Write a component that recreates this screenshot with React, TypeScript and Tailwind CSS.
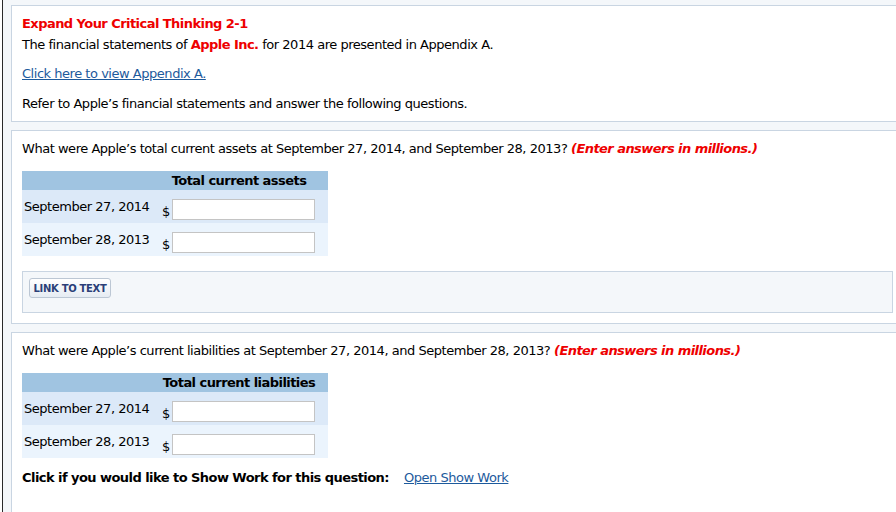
import React from "react";

const font = { fontFamily: '"DejaVu Sans", Verdana, sans-serif' };

function AnswerTable({ header }: { header: string }) {
  const rows = [
    { label: "September 27, 2014", bg: "bg-[#dce9f8]" },
    { label: "September 28, 2013", bg: "bg-[#ebf4fd]" },
  ];
  return (
    <div className="w-[306px]">
      <div className="flex h-[19px] items-center bg-[#a0c4e1]">
        <div className="w-[128px]" />
        <div className="flex-1 whitespace-nowrap text-center text-[13px] font-bold leading-[16px] tracking-[-0.55px] text-black">
          {header}
        </div>
      </div>
      {rows.map((r) => (
        <div key={r.label} className={`flex h-[33px] ${r.bg}`}>
          <div className="flex w-[138px] items-center whitespace-nowrap pl-[2px] text-[13px] leading-[16px] tracking-[-0.47px] text-black">
            {r.label}
          </div>
          <div className="flex w-[12px] items-end pb-[3px] pl-[2px] text-[13px] leading-[16px] text-black">
            $
          </div>
          <div className="pt-[9px]">
            <div className="h-[21px] w-[143px] border border-[#c4c4c4] bg-white" />
          </div>
        </div>
      ))}
    </div>
  );
}

function Question({ text }: { text: string }) {
  return (
    <div className="whitespace-nowrap text-[13px] leading-[16px] tracking-[-0.47px] text-black">
      {text}{" "}
      <span className="font-bold italic tracking-[-0.55px] text-[#ee0000]">
        (Enter answers in millions.)
      </span>
    </div>
  );
}

export default function App() {
  return (
    <div className="flex h-[512px] w-[896px] overflow-hidden bg-[#f4f7fa]" style={font}>
      <div className="w-[2px] bg-white" />
      <div className="w-px bg-[#2a2a2a]" />
      <div className="flex flex-1 flex-col pl-[8px] pt-[5px]">
        {/* Panel 1 */}
        <div className="border-y border-l border-[#c9d5e2] bg-white pb-[9px] pl-[10px] pt-[10px] tracking-[-0.47px]">
          <div className="text-[13px] font-bold leading-[16px] tracking-[-0.55px] text-[#ee0000]">
            Expand Your Critical Thinking 2-1
          </div>
          <div className="mt-[5px] text-[13px] leading-[16px] text-black">
            The financial statements of{" "}
            <span className="font-bold tracking-[-0.55px] text-[#ee0000]">Apple Inc.</span> for 2014
            are presented in Appendix A.
          </div>
          <div className="mt-[13px] text-[13px] leading-[16px]">
            <a className="text-[#1d5a9c] underline">Click here to view Appendix A.</a>
          </div>
          <div className="mt-[14px] text-[13px] leading-[16px] text-black">
            Refer to Apple’s financial statements and answer the following questions.
          </div>
        </div>

        {/* Panel 2 */}
        <div className="mt-[8px] border-y border-l border-[#c9d5e2] bg-white pb-[10px] pl-[10px] pt-[10px]">
          <Question text="What were Apple’s total current assets at September 27, 2014, and September 28, 2013?" />
          <div className="mt-[14px]">
            <AnswerTable header="Total current assets" />
          </div>
          <div className="mr-[3px] mt-[15px] h-[42px] border border-[#c9d5e2] bg-[#f4f7fa] pl-[6px] pt-[6px]">
            <div className="flex h-[20px] w-[82px] items-center justify-center rounded-[3px] border border-[#bcc7d4] bg-gradient-to-b from-white to-[#e6ecf3] text-[10px] font-bold tracking-[-0.3px] text-[#2b3f78]">
              LINK TO TEXT
            </div>
          </div>
        </div>

        {/* Panel 3 */}
        <div className="mt-[8px] flex-1 border-l border-t border-[#c9d5e2] bg-white pl-[10px] pt-[10px]">
          <Question text="What were Apple’s current liabilities at September 27, 2014, and September 28, 2013?" />
          <div className="mt-[14px]">
            <AnswerTable header="Total current liabilities" />
          </div>
          <div className="mt-[12px] flex text-[13px] leading-[16px]">
            <span className="font-bold tracking-[-0.55px] text-black">
              Click if you would like to Show Work for this question:
            </span>
            <a className="ml-[15px] tracking-[-0.47px] text-[#1d5a9c] underline">Open Show Work</a>
          </div>
        </div>
      </div>
    </div>
  );
}
